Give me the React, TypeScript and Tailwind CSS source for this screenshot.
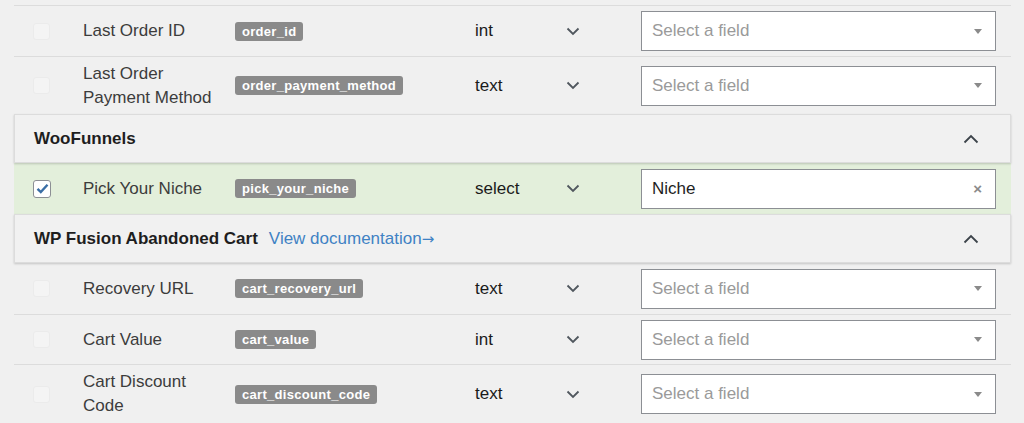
import React from "react";

const font = { fontFamily: '"Liberation Sans", Arial, sans-serif' };

function ChevronDown() {
  return (
    <svg width="14" height="9" viewBox="0 0 14 9" fill="none">
      <path d="M1.5 1.5 L7 7 L12.5 1.5" stroke="#50575e" strokeWidth="1.8" />
    </svg>
  );
}

function ChevronUp() {
  return (
    <svg width="16" height="10" viewBox="0 0 16 10" fill="none">
      <path d="M1.5 8.5 L8 2 L14.5 8.5" stroke="#3c434a" strokeWidth="1.8" />
    </svg>
  );
}

function Checkbox({ checked }: { checked?: boolean }) {
  if (checked) {
    return (
      <div className="w-[18px] h-[18px] rounded-[3px] border border-[#8c8f94] bg-white flex items-center justify-center">
        <svg width="13" height="11" viewBox="0 0 13 11" fill="none">
          <path d="M1.5 5.8 L4.8 9 L11.5 1.8" stroke="#3a6ea5" strokeWidth="2.4" />
        </svg>
      </div>
    );
  }
  return <div className="w-[17px] h-[17px] rounded-[3px] border border-[#ebebeb] bg-[#f4f4f4]" />;
}

function Select({ value }: { value?: string }) {
  return (
    <div className="w-[355px] h-[40px] border border-[#8c8f94] bg-white flex items-center pl-[10px] pr-[13px]">
      {value ? (
        <>
          <span className="flex-1 text-[17px] text-[#1e1e1e]">{value}</span>
          <span className="text-[15px] font-bold text-[#8a8a8a] leading-none">×</span>
        </>
      ) : (
        <>
          <span className="flex-1 text-[17px] text-[#9a9a9a]">Select a field</span>
          <svg width="8" height="5" viewBox="0 0 8 5">
            <path d="M0 0 L8 0 L4 5 Z" fill="#8a8a8a" />
          </svg>
        </>
      )}
    </div>
  );
}

function Row({
  label,
  slug,
  type,
  h,
  checked,
  value,
  green,
  last,
}: {
  label: React.ReactNode;
  slug: string;
  type: string;
  h: string;
  checked?: boolean;
  value?: string;
  green?: boolean;
  last?: boolean;
}) {
  return (
    <div
      className={`flex items-center ${h} ${green ? "bg-[#e3efdb]" : ""} ${
        last ? "" : "border-b border-[#dcdcdc]"
      }`}
    >
      <div className="w-[69px] pl-[19px] flex items-center">
        <Checkbox checked={checked} />
      </div>
      <div className="w-[152px] text-[17px] leading-[24px] text-[#3c3c3c]">{label}</div>
      <div className="w-[240px] flex items-center">
        <span className="bg-[#8a8a8a] text-white text-[13px] font-bold leading-[19px] px-[7px] rounded-[3px] tracking-[0.3px]">
          {slug}
        </span>
      </div>
      <div className="w-[91px] text-[17px] text-[#1a1a1a]">{type}</div>
      <div className="w-[75px] flex items-center">
        <ChevronDown />
      </div>
      <Select value={value} />
    </div>
  );
}

function Header({ children }: { children: React.ReactNode }) {
  return (
    <div className="h-[49px] flex items-center border border-[#dcdcdc] bg-[#f1f1f1] shadow-[0_1px_2px_rgba(0,0,0,0.18)] pl-[19px] pr-[31px] relative z-10">
      <div className="flex-1 flex items-center text-[17px]">{children}</div>
      <ChevronUp />
    </div>
  );
}

export default function App() {
  return (
    <div className="w-[1024px] h-[423px] overflow-hidden bg-[#f0f0f0]" style={font}>
      <div className="px-[14px] pr-[13px]">
        <div className="h-[6px] border-b border-[#dcdcdc]" />
        <Row label="Last Order ID" slug="order_id" type="int" h="h-[51px]" />
        <Row
          label={
            <>
              Last Order
              <br />
              Payment Method
            </>
          }
          slug="order_payment_method"
          type="text"
          h="h-[57px]"
          last
        />
        <Header>
          <span className="font-bold text-[#1e1e1e]">WooFunnels</span>
        </Header>
        <Row
          label="Pick Your Niche"
          slug="pick_your_niche"
          type="select"
          h="h-[51px]"
          checked
          value="Niche"
          green
          last
        />
        <Header>
          <span className="font-bold text-[#1e1e1e]">WP Fusion Abandoned Cart</span>
          <span className="ml-[11px] text-[#3f82c4]">
            View documentation
            <span className="font-['DejaVu_Sans',sans-serif] text-[15px]">→</span>
          </span>
        </Header>
        <Row label="Recovery URL" slug="cart_recovery_url" type="text" h="h-[52px]" />
        <Row label="Cart Value" slug="cart_value" type="int" h="h-[50px]" />
        <Row
          label={
            <>
              Cart Discount
              <br />
              Code
            </>
          }
          slug="cart_discount_code"
          type="text"
          h="h-[58px]"
          last
        />
      </div>
    </div>
  );
}
